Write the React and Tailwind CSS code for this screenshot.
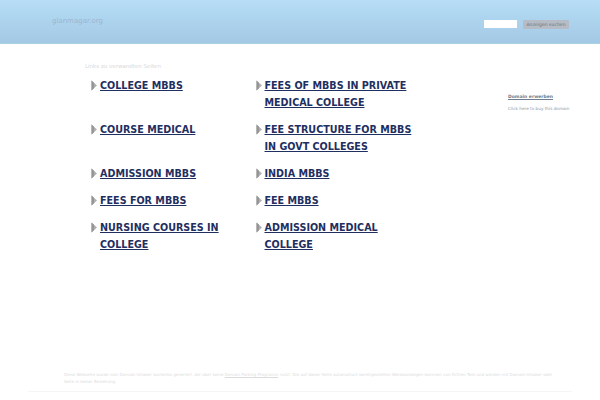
const rows = [
  ["COLLEGE MBBS", "FEES OF MBBS IN PRIVATE MEDICAL COLLEGE"],
  ["COURSE MEDICAL", "FEE STRUCTURE FOR MBBS IN GOVT COLLEGES"],
  ["ADMISSION MBBS", "INDIA MBBS"],
  ["FEES FOR MBBS", "FEE MBBS"],
  ["NURSING COURSES IN COLLEGE", "ADMISSION MEDICAL COLLEGE"],
];

function Arrow() {
  return (
    <svg width="7" height="11" viewBox="0 0 7 11" className="shrink-0 mt-[3px]">
      <polygon points="0.5,0.5 6,5.5 0.5,10.5" fill="#b0b0b0" />
      <polygon points="0.5,0.5 3,2.8 3,8.2 0.5,10.5" fill="#969696" />
    </svg>
  );
}

function LinkItem({ label }) {
  return (
    <a href="#" className="flex gap-[2px] w-[165px] pr-2">
      <Arrow />
      <span className="text-[9.6px] leading-[17px] font-bold underline text-[#1f2f5f]">
        {label}
      </span>
    </a>
  );
}

export default function App() {
  return (
    <div className="h-[400px] w-[600px] flex flex-col bg-white overflow-hidden font-['DejaVu_Sans',sans-serif]">
      <header className="h-[44px] shrink-0 flex items-start justify-between bg-gradient-to-b from-[#b6def5] to-[#a3c8e5] border-b border-[#a8d2e2] pl-[52px] pr-[31px]">
        <span className="mt-[15px] text-[7px] leading-[13px] text-[#9db4cf]">glanmagar.org</span>
        <div className="flex gap-[6px] mt-[20px]">
          <div className="w-[33px] h-[8px] bg-white" />
          <button className="w-[46px] h-[9px] bg-[#b5bcc6] text-[4.6px] leading-[9px] text-[#6f7379] rounded-[1px] whitespace-nowrap">
            Anzeigen suchen
          </button>
        </div>
      </header>

      <main className="flex pl-[85px] pr-[31px] pt-[18px]">
        <div className="w-[335px]">
          <p className="text-[5.5px] leading-[9px] text-[#d8d8d8]">Links zu verwandten Seiten</p>
          <div className="pl-[6px] pt-[6px] flex flex-col">
            {rows.map(([left, right]) => (
              <div key={left} className="flex mb-[10px]">
                <LinkItem label={left} />
                <LinkItem label={right} />
              </div>
            ))}
          </div>
        </div>
        <aside className="ml-auto mt-[31px] w-[61px] shrink-0">
          <p className="text-[4.5px] leading-[8px] font-bold underline text-[#6f7f90]">Domain erwerben</p>
          <p className="mt-[4px] text-[4.2px] leading-[8px] text-[#8e98a3] whitespace-nowrap">Click here to buy this domain</p>
        </aside>
      </main>

      <footer className="mt-auto ml-[28px] mb-[8px] pl-[36px] pb-[6px] w-[544px] border-b border-[#f5f5f5]">
        <p className="text-[4px] leading-[7px] text-[#dcdcdc]">
          Diese Webseite wurde vom Domain Inhaber kostenlos generiert, der über keine{" "}
          <a href="#" className="underline">Domain Parking Programm</a>{" "}
          nutzt. Die auf dieser Seite automatisch bereitgestellten Werbeanzeigen kommen von Dritten Teils und werden mit Domain-Inhaber oder
          <br />
          Seite in keiner Beziehung.
        </p>
      </footer>
    </div>
  );
}
